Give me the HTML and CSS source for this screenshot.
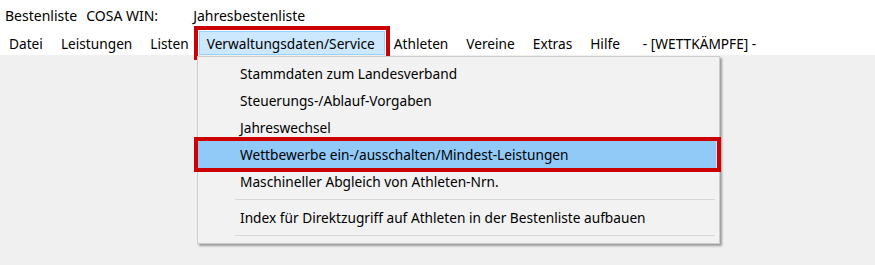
FILE: index.html
```html
<!DOCTYPE html>
<html lang="de">
<head>
<meta charset="utf-8">
<title>Bestenliste</title>
<link rel="stylesheet" href="styles.css">
</head>
<body>
<div class="window">
  <div class="titlebar">
    <span class="t1">Bestenliste</span>
    <span class="t2">COSA WIN:</span>
    <span class="t3">Jahresbestenliste</span>
  </div>
  <div class="menubar">
    <span class="mitem">Datei</span>
    <span class="mitem">Leistungen</span>
    <span class="mitem">Listen</span>
    <span class="mitem active">Verwaltungsdaten/Service</span>
    <span class="mitem">Athleten</span>
    <span class="mitem">Vereine</span>
    <span class="mitem">Extras</span>
    <span class="mitem">Hilfe</span>
    <span class="mitem context">- [WETTKÄMPFE] -</span>
  </div>
  <div class="client"></div>
  <div class="dropdown">
    <div class="ditem">Stammdaten zum Landesverband</div>
    <div class="ditem">Steuerungs-/Ablauf-Vorgaben</div>
    <div class="ditem">Jahreswechsel</div>
    <div class="ditem hover">Wettbewerbe ein-/ausschalten/Mindest-Leistungen</div>
    <div class="ditem">Maschineller Abgleich von Athleten-Nrn.</div>
    <div class="sep"></div>
    <div class="ditem">Index für Direktzugriff auf Athleten in der Bestenliste aufbauen</div>
    <div class="sep"></div>
  </div>
</div>
</body>
</html>
```

FILE: styles.css
```css
html, body {
  margin: 0;
  padding: 0;
  background: #f0f0f0;
}
body {
  font-family: "Noto Sans", "Open Sans", sans-serif;
  font-size: 13.7px;
  color: #000;
}
.window {
  position: relative;
  width: 875px;
  height: 265px;
  overflow: hidden;
  background: #f0f0f0;
}
.titlebar {
  height: 31px;
  background: #fff;
  display: flex;
  align-items: center;
  white-space: nowrap;
  font-size: 14px;
}
.t1 { margin-left: 5px; }
.t2 { margin-left: 9px; }
.t3 { margin-left: 35px; }
.menubar {
  height: 24px;
  background: #fff;
  display: flex;
  align-items: stretch;
  white-space: nowrap;
}
.mitem {
  display: flex;
  align-items: center;
  padding: 0 9px;
}
.mitem.active {
  padding: 0 10px 0 8px;
  margin-left: 1px;
  background: #cce8ff;
  box-shadow: inset 0 0 0 1px #99d1ff;
  outline: 4px solid #cc0000;
  outline-offset: 1px;
}
.mitem.context {
  margin-left: 5px;
}
.client {
  height: 210px;
}
.dropdown {
  position: absolute;
  left: 197px;
  top: 56px;
  width: 521px;
  padding: 3px 0 3px 0;
  background: #f2f2f2;
  border: 1px solid #cccccc;
  box-shadow: 2px 2px 2px rgba(0, 0, 0, 0.35);
  white-space: nowrap;
}
.ditem {
  height: 27px;
  line-height: 27px;
  padding-left: 42px;
  margin: 0 2px 0 0;
}
.ditem.hover {
  background: #91c9f7;
  box-shadow: inset -1px 0 0 #cde6fb;
  outline: 4px solid #cc0000;
  outline-offset: 0;
}
.sep {
  height: 9px;
  display: flex;
  align-items: center;
  margin: 0 4px 0 37px;
}
.sep::before {
  content: "";
  display: block;
  flex: 1;
  height: 1px;
  background: #d7d7d7;
}
```
